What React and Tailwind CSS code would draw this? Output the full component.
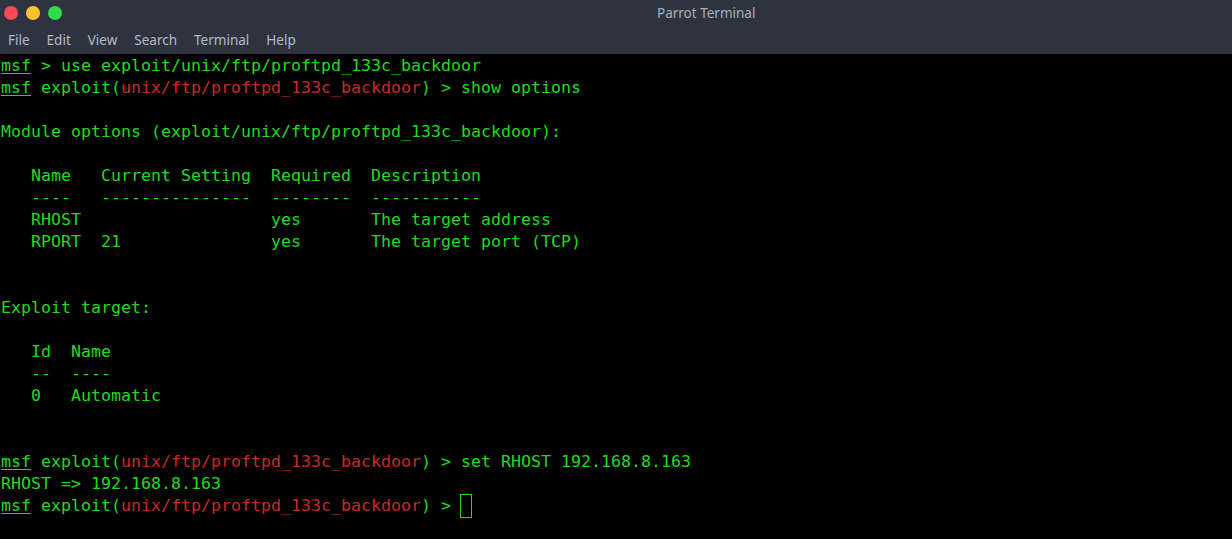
const G = ({ children }) => <span className="text-[#1cdc1c]">{children}</span>;
const Msf = () => <span className="underline underline-offset-2">msf</span>;
const R = ({ children }) => <span className="text-[#c82828]">{children}</span>;

const Line = ({ children }) => (
  <div className="h-[22px] leading-[22px] whitespace-pre">{children || " "}</div>
);

const plain = [
  "",
  "Module options (exploit/unix/ftp/proftpd_133c_backdoor):",
  "",
  "   Name   Current Setting  Required  Description",
  "   ----   ---------------  --------  -----------",
  "   RHOST                   yes       The target address",
  "   RPORT  21               yes       The target port (TCP)",
  "",
  "",
  "Exploit target:",
  "",
  "   Id  Name",
  "   --  ----",
  "   0   Automatic",
  "",
  "",
];

export default function App() {
  return (
    <div className="w-[1232px] h-[539px] bg-black flex flex-col overflow-hidden">
      <header className="h-[54px] shrink-0 bg-[#2f3340] flex flex-col font-['Noto_Sans',sans-serif] text-[13.5px] text-[#b4bac6]">
        <div className="relative h-[25px] flex items-center gap-2 pl-1">
          <span className="w-[14px] h-[14px] rounded-full bg-[#fb4a55]" />
          <span className="w-[14px] h-[14px] rounded-full bg-[#fdc22f]" />
          <span className="w-[14px] h-[14px] rounded-full bg-[#2fdc4c]" />
          <span className="absolute left-[657px] top-[3px] leading-5 text-[#a9afbd]">Parrot Terminal</span>
        </div>
        <nav className="flex gap-[17px] pl-2 h-[29px] items-center leading-5">
          <span>File</span>
          <span>Edit</span>
          <span>View</span>
          <span>Search</span>
          <span>Terminal</span>
          <span>Help</span>
        </nav>
      </header>
      <main className="pl-px pt-px font-['DejaVu_Sans_Mono',monospace] text-[16.62px] text-[#1cdc1c]">
        <Line><Msf /> &gt; use exploit/unix/ftp/proftpd_133c_backdoor</Line>
        <Line><Msf /> exploit(<R>unix/ftp/proftpd_133c_backdoor</R>) &gt; show options</Line>
        {plain.map((t, i) => <Line key={i}>{t}</Line>)}
        <Line><Msf /> exploit(<R>unix/ftp/proftpd_133c_backdoor</R>) &gt; set RHOST 192.168.8.163</Line>
        <Line>RHOST =&gt; 192.168.8.163</Line>
        <Line>
          <G><Msf /> exploit(</G><R>unix/ftp/proftpd_133c_backdoor</R>) &gt; <span className="inline-block align-top w-3 h-6 -mt-px -ml-px border border-[#1cdc1c]" />
        </Line>
      </main>
    </div>
  );
}
